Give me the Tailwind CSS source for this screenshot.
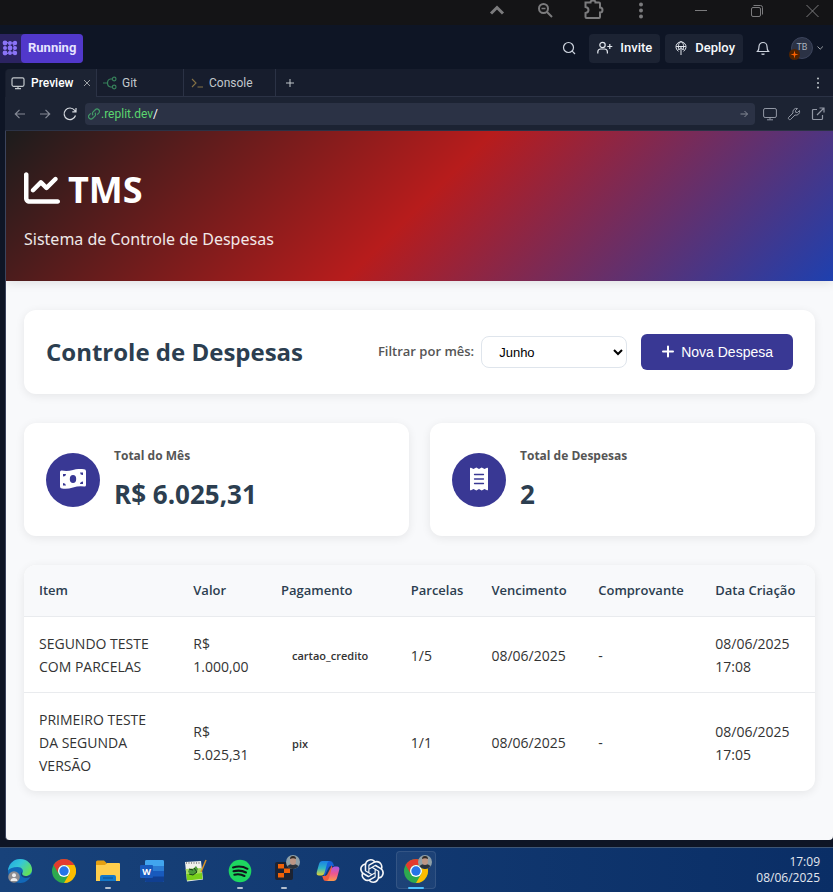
<!DOCTYPE html>
<html lang="pt-BR">
<head>
<meta charset="utf-8">
<meta name="viewport" content="width=device-width, initial-scale=1">
<title>TMS - Sistema de Controle de Despesas</title>
<script src="https://cdn.jsdelivr.net/npm/@tailwindcss/browser@4"></script>
</head>
<body class="min-h-screen flex flex-col overflow-x-hidden bg-[#0e1525] font-['Open_Sans',sans-serif]">

<!-- Browser title bar -->
<div class="flex h-[25px] shrink-0 items-start justify-end gap-9 overflow-hidden bg-[#141416] pr-2 text-[#7b7b7d]">
  <div class="flex gap-6">
    <button aria-label="Recolher" class="size-6"><svg viewBox="0 0 24 24" class="size-6" fill="none" stroke="currentColor" stroke-width="3"><path d="M6 13.5 12 7.5l6 6"/></svg></button>
    <button aria-label="Zoom" class="size-6"><svg viewBox="0 0 24 24" class="size-6" fill="none" stroke="currentColor" stroke-width="2"><circle cx="10.5" cy="8.500" r="4.500"/><path d="m14 12 5 5"/><path d="M8.500 8.500h4" stroke-width="1.500"/></svg></button>
    <button aria-label="Extensões" class="size-6"><svg viewBox="0 0 24 24" class="size-6" fill="none" stroke="currentColor" stroke-width="2"><path d="M4.500 2.500H9.500Q9.500.5 12 .5T14.500 2.500H18Q19 2.500 19 3.500V7.500Q21.500 7.500 21.500 10T19 12.500V17Q19 18 18 18H5.500Q4.500 18 4.500 17V13Q7.500 12.500 7.500 10T4.500 7Z"/></svg></button>
    <button aria-label="Menu" class="size-6"><svg viewBox="0 0 24 24" class="size-6" fill="currentColor"><circle cx="12" cy="4.500" r="2"/><circle cx="12" cy="10.500" r="2"/><circle cx="12" cy="16.500" r="2"/></svg></button>
  </div>
  <div class="flex gap-8">
    <button aria-label="Minimizar" class="size-6"><svg viewBox="0 0 24 24" class="size-6" fill="none" stroke="currentColor"><path d="M6 10.500h12"/></svg></button>
    <button aria-label="Restaurar" class="size-6"><svg viewBox="0 0 24 24" class="size-6" fill="none" stroke="currentColor"><rect x="6.500" y="7.500" width="9" height="9" rx="1.500"/><path d="M8.500 5.500h7q2 0 2 2v7"/></svg></button>
    <button aria-label="Fechar" class="size-6"><svg viewBox="0 0 24 24" class="size-6" fill="none" stroke="currentColor"><path d="m5.500 5 12 12m0-12-12 12"/></svg></button>
  </div>
</div>

<!-- Workspace header -->
<header class="flex h-11 shrink-0 items-center justify-between pt-[2px] pr-2 font-[Roboto,sans-serif] text-[13px] text-[#f5f9fc]">
  <button class="flex h-[29px] items-center rounded-r bg-[#2b2361] font-bold text-[#e6e3ff]">
    <svg viewBox="0 0 21 20" class="h-5 w-[21px]" fill="#8b74f7"><circle cx="5" cy="5" r="2.400"/><circle cx="10" cy="5" r="2"/><circle cx="15" cy="5" r="2.200"/><circle cx="5" cy="10" r="2"/><circle cx="10" cy="10" r="2.400"/><circle cx="15" cy="10" r="2"/><circle cx="5" cy="15" r="2.400"/><circle cx="10" cy="15" r="2"/><circle cx="15" cy="15" r="2.200"/><path d="m7 4 5 6-5 6M12 4l3 6-3 6" stroke="#8b74f7" fill="none"/></svg>
    <span class="flex h-full items-center rounded bg-[#5138cb] px-[7px]">Running</span>
  </button>
  <div class="flex items-center">
    <button aria-label="Buscar" class="mr-3"><svg viewBox="0 0 16 16" class="size-4" fill="none" stroke="#cdd3de" stroke-width="1.200"><circle cx="7.500" cy="7.500" r="5"/><path d="m11.200 11.200 2.800 2.800"/></svg></button>
    <button class="mr-[5px] flex h-[29px] items-center gap-[7px] rounded bg-[#1c2333] px-2 font-medium"><svg viewBox="0 0 16 16" class="size-4" fill="none" stroke="#e4e8ef" stroke-width="1.200"><circle cx="5.500" cy="5" r="2.700"/><path d="M.8 13.500V12q0-3 3-3h3.600q3 0 3 3v1.500M12.800 4v5M10.300 6.500h5"/></svg>Invite</button>
    <button class="mr-3 flex h-[29px] items-center gap-[6px] rounded bg-[#1c2333] px-2 font-medium"><svg viewBox="0 0 16 16" class="size-4" fill="none" stroke="#e4e8ef"><path d="M5.500 11.200A5 5 0 1 1 10.500 11.200M3.200 6.500h9.600M6 10C4.500 6 6 2 8 1.500 10 2 11.500 6 10 10M8 15V7.500M5.700 10 8 7.500l2.300 2.500"/></svg>Deploy</button>
    <button aria-label="Notificações" class="mr-5"><svg viewBox="0 0 16 16" class="size-4" fill="none" stroke="#cdd3de" stroke-width="1.200"><path d="M2.500 11.500Q4 10 4 6.500a4 4 0 0 1 8 0q0 3.500 1.500 5ZM6.500 13.800q1.500 1.300 3 0"/></svg></button>
    <button aria-label="Conta" class="relative mr-[2px] flex size-[22px] items-center justify-center rounded-full border border-[#3c445c] bg-[#2b3245] text-[9px] text-[#aab2bf]">TB<span class="absolute -bottom-[2px] -left-[3px] size-[11px] rounded-full bg-[#512300]"><svg viewBox="0 0 11 11" class="size-[11px]" fill="#ff6200"><path d="M5.500 1.500 6.300 4.700 9.500 5.500 6.300 6.300 5.500 9.500 4.700 6.300 1.500 5.500 4.700 4.700Z"/></svg></span></button>
    <svg viewBox="0 0 10 10" class="size-[10px]" fill="none" stroke="#9da2a6"><path d="m2.500 3.500 2.700 2.700 2.700-2.700"/></svg>
  </div>
</header>

<div class="flex flex-1 flex-col pl-[5px]">
  <!-- Pane tabs -->
  <div class="flex h-7 items-stretch rounded-tl bg-[#171d2d] pl-px font-[Roboto,sans-serif] text-[12px] text-[#c2c8cc]">
    <div class="flex w-[91px] items-center rounded-tl border-r border-[#2b3245] bg-[#1c2333] pl-[5px] font-medium text-white">
      <svg viewBox="0 0 14 14" class="size-[14px]" fill="none" stroke="#c2c8cc" stroke-width="1.200"><rect x="1" y="1.800" width="12" height="8.500" rx="1.500"/><path d="M4 12.600h6M7 10.500v2"/></svg>
      <a href="#preview" class="ml-[6px]">Preview</a>
      <button aria-label="Fechar aba" class="ml-auto mr-1"><svg viewBox="0 0 10 10" class="size-[10px]" fill="none" stroke="#9da2a6"><path d="m2 2 6 6m0-6-6 6"/></svg></button>
    </div>
    <a href="#git" class="flex w-[87px] items-center gap-[5px] border-r border-b border-[#2b3245] pl-[6px]"><svg viewBox="0 0 14 14" class="size-[14px]" fill="none" stroke="#37815b" stroke-width="1.200"><path d="M0 7h4M9.500 3H7.500Q4.500 3.500 4.500 7t3 4h2"/><circle cx="11.200" cy="3" r="1.800"/><circle cx="11.200" cy="11" r="1.800"/></svg>Git</a>
    <a href="#console" class="flex w-[92px] items-center gap-[5px] border-r border-b border-[#2b3245] pl-[6px]"><svg viewBox="0 0 14 14" class="size-[14px]" fill="none" stroke="#867245" stroke-width="1.100"><path d="m2 3 4 4-4 4M7.500 11H13"/></svg>Console</a>
    <div class="flex flex-1 items-center justify-between border-b border-[#2b3245] pr-2 pl-[7px]">
      <button aria-label="Nova aba"><svg viewBox="0 0 14 14" class="size-[14px]" fill="none" stroke="#c2c8cc"><path d="M7 3v8M3 7h8"/></svg></button>
      <button aria-label="Opções"><svg viewBox="0 0 14 14" class="size-[14px]" fill="#c2c8cc"><circle cx="7" cy="2.500" r="1"/><circle cx="7" cy="7" r="1"/><circle cx="7" cy="11.500" r="1"/></svg></button>
    </div>
  </div>

  <!-- Address row -->
  <div class="flex h-[34px] items-center border-b border-[#2b3245] bg-[#1c2333] pr-2 pl-2 font-[Roboto,sans-serif] text-[12px]">
    <div class="flex shrink-0 items-center gap-[11px] text-[#858a96]">
      <button aria-label="Voltar"><svg viewBox="0 0 14 14" class="size-[14px]" fill="none" stroke="currentColor" stroke-width="1.200"><path d="M12 7H2.500M6.500 2.800 2.300 7l4.200 4.200"/></svg></button>
      <button aria-label="Avançar"><svg viewBox="0 0 14 14" class="size-[14px]" fill="none" stroke="currentColor" stroke-width="1.200"><path d="M2 7h9.500M7.500 2.800 11.700 7l-4.200 4.200"/></svg></button>
      <button aria-label="Recarregar" class="text-[#d5d9df]"><svg viewBox="0 0 14 14" class="size-[14px]" fill="none" stroke="currentColor" stroke-width="1.200"><path d="M12.500 8.500A5.800 5.800 0 1 1 11.500 3.200L13 4.800M13 1v3.800H9.300"/></svg></button>
    </div>
    <div class="mx-2 flex h-[22px] flex-1 items-center rounded bg-[#2b3245] pr-1 pl-[3px]">
      <svg viewBox="0 0 14 14" class="size-3 shrink-0" fill="none" stroke="#419a67" stroke-width="1.400"><path d="M6 8.500a2.800 2.800 0 0 1 0-4L8.500 2a2.800 2.800 0 0 1 4 4L10.800 7.700M8 5.500a2.800 2.800 0 0 1 0 4L5.500 12a2.800 2.800 0 0 1-4-4L3.200 6.300"/></svg>
      <label for="url" class="pl-px text-[#5bd66f]">.replit.dev</label>
      <input id="url" value="/" class="min-w-0 flex-1 bg-transparent text-white outline-none">
      <button aria-label="Ir" class="text-[#858a96]"><svg viewBox="0 0 14 14" class="size-[14px]" fill="none" stroke="currentColor"><path d="M3.500 7h7M7.500 4l3 3-3 3"/></svg></button>
    </div>
    <div class="flex items-center gap-[10px] text-[#9298a5]">
      <button aria-label="Dispositivos"><svg viewBox="0 0 14 14" class="size-[14px]" fill="none" stroke="currentColor"><rect x=".6" y="1.500" width="12.800" height="9" rx="1.500"/><path d="M4 12.800h6M7 10.500v2"/></svg></button>
      <button aria-label="Ferramentas"><svg viewBox="0 0 14 14" class="size-[14px]" fill="none" stroke="currentColor"><path d="M12.500 3.500 10.500 5.500 8.700 5.300 8.500 3.500 10.500 1.500A3.600 3.600 0 0 0 6 6L1.500 10.500a1.500 1.500 0 0 0 2 2L8 8a3.600 3.600 0 0 0 4.500-4.500Z"/></svg></button>
      <button aria-label="Abrir em nova aba"><svg viewBox="0 0 14 14" class="size-[14px]" fill="none" stroke="currentColor" stroke-width="1.200"><path d="M6 2.500H2.500q-1 0-1 1v8q0 1 1 1h8q1 0 1-1V8M8.500 1H13v4.500M13 1 6 8"/></svg></button>
    </div>
  </div>

  <!-- Application -->
  <div class="flex flex-1 flex-col overflow-hidden rounded-b border-l border-[#3c445c] bg-[#f8f9fb]">
    <header class="bg-linear-[135deg,#1c1c1c_0%,#b71c1c_50%,#1e40af_100%] px-[18px] pt-8 pb-7 text-white shadow-[0_2px_10px_rgba(0,0,0,0.1)]">
      <h1 class="flex items-center gap-2 text-[36px] leading-[54px] font-bold">
        <svg viewBox="0 0 512 512" class="mb-1 size-9" fill="currentColor"><path d="M64 64c0-17.700-14.300-32-32-32S0 46.300 0 64V400c0 44.200 35.800 80 80 80H480c17.700 0 32-14.300 32-32s-14.300-32-32-32H80c-8.800 0-16-7.200-16-16V64zm406.600 86.600c12.500-12.500 12.500-32.800 0-45.300s-32.800-12.500-45.300 0L320 210.700l-57.400-57.400c-12.500-12.500-32.800-12.500-45.300 0l-112 112c-12.500 12.500-12.500 32.800 0 45.300s32.800 12.500 45.300 0L240 221.300l57.400 57.400c12.500 12.500 32.800 12.500 45.300 0l128-128z"/></svg>
        TMS
      </h1>
      <p class="mt-2 font-['Noto_Sans',sans-serif] text-[16px] leading-7 opacity-90">Sistema de Controle de Despesas</p>
    </header>

    <main class="flex flex-col gap-[29px] px-[18px] pt-[29px] pb-12">
      <section class="flex items-center justify-between rounded-xl bg-white px-[22px] py-6 shadow-[0_2px_10px_rgba(0,0,0,0.08)]">
        <h2 class="text-[24px] leading-9 font-bold whitespace-nowrap text-[#2c3e50]">Controle de Despesas</h2>
        <div class="flex items-center">
          <label for="mes" class="mr-[7px] text-[13px] font-semibold whitespace-nowrap text-[#555]">Filtrar por mês:</label>
          <select id="mes" class="mr-[14px] h-8 w-[146px] rounded-lg border border-[#dfe5ec] bg-white pl-[13px] font-['Liberation_Sans',sans-serif] text-[13px] text-black"><option>Junho</option><option>Julho</option></select>
          <button class="flex h-9 items-center gap-[6px] rounded-md bg-[#393894] px-5 font-['Liberation_Sans',sans-serif] text-[14px] whitespace-nowrap text-white">
            <svg viewBox="0 0 14 14" class="size-[14px]" fill="none" stroke="currentColor" stroke-width="2" stroke-linecap="round"><path d="M7 1.500v10M2 6.500h10"/></svg>Nova Despesa</button>
        </div>
      </section>

      <section class="grid grid-cols-2 gap-[21px]">
        <article class="flex items-center gap-[14px] rounded-xl bg-white px-[22px] py-[21px] shadow-[0_2px_10px_rgba(0,0,0,0.08)]">
          <div class="flex size-[54px] items-center justify-center rounded-full bg-[#393894] pb-[2px]">
            <svg viewBox="0 0 26 20" class="h-5 w-[26px]"><path fill="#fff" d="M0 3Q0 1.300 1.700 1.500 7 2.700 13 1T24 .3Q26 .5 26 2.200V16q0 1.700-1.700 1.500Q19 16.500 13 18.500T2 19.500Q0 19.300 0 17.500Z"/><g fill="#393894"><ellipse cx="13" cy="10" rx="3.200" ry="4"/><path d="M3 5h3q-.2 2.500-3 2.500ZM3 14q2.800.2 3 2.500H3ZM23 3.500h-3q.2 2.600 3 2.500ZM23 12.500q-2.800.1-3 2.500h3Z"/></g></svg>
          </div>
          <div>
            <h3 class="text-[12px] leading-6 font-bold text-[#555]">Total do Mês</h3>
            <p class="mt-[5px] text-[26px] leading-[42px] font-bold text-[#2c3e50]">R$ 6.025,31</p>
          </div>
        </article>
        <article class="flex items-center gap-[14px] rounded-xl bg-white px-[22px] py-[21px] shadow-[0_2px_10px_rgba(0,0,0,0.08)]">
          <div class="flex size-[54px] items-center justify-center rounded-full bg-[#393894] pb-[2px]">
            <svg viewBox="0 0 18 24" class="h-6 w-[18px]"><path fill="#fff" d="M0 1.500Q0 .3 1 .8L3.500 2 6.300.5 9 2 11.700.5 14.500 2 17 .8q1-.5 1 .7V22.500q0 1.200-1 .7L14.500 22l-2.800 1.500L9 22l-2.700 1.500L3.500 22 1 23.200q-1 .5-1-.7Z"/><path stroke="#393894" stroke-width="1.300" stroke-linecap="round" d="M4.500 7.500h9M4.500 12h9M4.500 16.500h9"/></svg>
          </div>
          <div>
            <h3 class="text-[12px] leading-6 font-bold text-[#555]">Total de Despesas</h3>
            <p class="mt-[5px] text-[26px] leading-[42px] font-bold text-[#2c3e50]">2</p>
          </div>
        </article>
      </section>

      <div class="overflow-hidden rounded-xl bg-white shadow-[0_2px_10px_rgba(0,0,0,0.08)]">
        <table class="w-full table-fixed text-left text-[14px] leading-[23px] text-[#333] [&_td]:px-[15px] [&_td]:pt-[15px] [&_td]:pb-[14px] [&_th]:px-[15px] [&_th]:py-[14px]">
          <colgroup><col class="w-[19.500%]"><col class="w-[11.100%]"><col class="w-[16.400%]"><col class="w-[10.200%]"><col class="w-[13.500%]"><col class="w-[14.800%]"><col></colgroup>
          <thead class="border-b border-[#e9ebee] bg-[#f8f9fb] whitespace-nowrap text-[#2c3e50] [&_th]:text-[13px] [&_th]:font-semibold">
            <tr><th>Item</th><th>Valor</th><th>Pagamento</th><th>Parcelas</th><th>Vencimento</th><th>Comprovante</th><th>Data Criação</th></tr>
          </thead>
          <tbody>
            <tr class="border-b border-[#e9ebee]"><td>SEGUNDO TESTE COM PARCELAS</td><td>R$ 1.000,00</td><td><span class="px-[11px] text-[11px] font-semibold">cartao_credito</span></td><td>1/5</td><td>08/06/2025</td><td>-</td><td>08/06/2025 17:08</td></tr>
            <tr><td>PRIMEIRO TESTE DA SEGUNDA VERSÃO</td><td>R$ 5.025,31</td><td><span class="px-[11px] text-[11px] font-semibold">pix</span></td><td>1/1</td><td>08/06/2025</td><td>-</td><td>08/06/2025 17:05</td></tr>
          </tbody>
        </table>
      </div>
    </main>
  </div>
</div>

<!-- Taskbar -->
<footer class="mt-[7px] flex h-[45px] shrink-0 items-center justify-between border-t border-[#3e5675] bg-linear-to-r from-[#18427a] to-[#0a2e66] pr-[13px]">
  <nav class="-ml-[2px] flex h-full [&>button]:relative [&>button]:flex [&>button]:w-11 [&>button]:items-center [&>button]:justify-center [&>button]:pt-px">
    <button aria-label="Edge"><svg viewBox="0 0 24 24" class="size-6"><defs><linearGradient id="e1" x1="0" y1="0" x2="1" y2=".6"><stop stop-color="#22a6e0"/><stop offset=".5" stop-color="#35c7d8"/><stop offset="1" stop-color="#63e05a"/></linearGradient></defs><circle cx="12" cy="12" r="12" fill="#1268b8"/><path fill="url(#e1)" d="M0 11.500C1 4.500 6 0 12 0c7 0 12 5 12 10.500 0 4-3 6.500-6.500 6.500-3 0-4-1.500-3-3 1.500-2.500-.5-6-5-6C5 8 1.500 9.500 0 11.500Z"/><path fill="#17427b" d="M14 12.500c-2.500 2.500-.5 6.500 4 6.500 2 0 3.800-.8 5-1.500l1-3c-2 2-4 2.700-6.500 2.500-3 0-4.200-2-3.500-4.500Z"/><circle cx="6" cy="18" r="5.800" fill="#8e8d90"/><circle cx="6" cy="16.300" r="2" fill="#eee"/><path d="M2.600 22q0-3 3.400-3t3.400 3Z" fill="#eee"/></svg></button>
    <button aria-label="Chrome"><svg viewBox="0 0 24 24" class="size-6"><circle cx="12" cy="12" r="12" fill="#2da94f"/><path fill="#e33b2e" d="M1.600 6A12 12 0 0 1 22.400 6H12a6 6 0 0 0-5.200 9Z"/><path fill="#fdbd00" d="M22.400 6A12 12 0 0 1 12 24l5.200-9A6 6 0 0 0 12 6Z"/><circle cx="12" cy="12" r="6" fill="#fff"/><circle cx="12" cy="12" r="4.700" fill="#2674e8"/></svg></button>
    <button aria-label="Explorador de Arquivos"><svg viewBox="0 0 24 24" class="size-6"><path fill="#e6a010" d="M0 3q0-1.500 1.500-1.500H8L10.500 4V8H0Z"/><path fill="#ffce4d" d="M0 6h9l2-2h12q1 0 1 1v17H0Z"/><path fill="#1479c9" d="M4 22v-4q0-2 2-2h12q2 0 2 2v4Z"/><path stroke="#0b4f91" d="M7 19h10"/></svg><span class="absolute bottom-[3px] h-[2px] w-[6px] rounded bg-[#b4bfce]"></span></button>
    <button aria-label="Word"><svg viewBox="0 0 24 24" class="size-6"><rect x="5" y="1" width="19" height="22" rx="1.500" fill="#2b7cd3"/><path fill="#41a5ee" d="M5 2.500Q5 1 6.500 1h16Q24 1 24 2.500V7H5Z"/><path fill="#185abd" d="M5 12h19v6H5Z"/><path fill="#103f91" d="M5 17.500h19v4q0 1.500-1.500 1.500h-16Q5 23 5 21.500Z"/><rect y="6" width="13" height="13" rx="1" fill="#185abd"/><text x="6.500" y="15.500" fill="#fff" font-family="Open Sans" font-weight="700" font-size="9" text-anchor="middle">W</text></svg></button>
    <button aria-label="Notepad++"><svg viewBox="0 0 24 24" class="size-6"><path fill="#eef0ec" d="m1 3 16-1 2 18.500L3 22.500Z"/><path fill="#a9dc62" d="m1.700 10 15.600-1L18 14 2.300 15.500Z"/><path fill="#78d01a" d="m2.300 15 15.800-1L18.600 20 3 21.500Z"/><path d="M2 4h14" stroke="#999" stroke-dasharray="1 1.500" stroke-width="2"/><path fill="#4b9a3a" d="M4 13q1-4 5-3l3-3 2 3-2 4-4 2Z"/><path stroke="#183c1b" fill="none" d="M5 10l4 1m1-2 3 4-4 3-4-1"/><path stroke="#d99427" stroke-width="1.500" d="m22 1-5 12"/></svg></button>
    <button aria-label="Spotify"><svg viewBox="0 0 24 24" class="size-6"><circle cx="12" cy="12" r="11.300" fill="#1ed760"/><path d="M5 8.500q8-2.300 14.500 1.300M5.500 12.300q7-1.800 12.500 1.200M6.300 15.800q5.500-1.300 10.200 1.200" fill="none" stroke="#10151b" stroke-width="2" stroke-linecap="round"/></svg><span class="absolute bottom-[3px] h-[2px] w-[6px] rounded bg-[#b4bfce]"></span></button>
    <button aria-label="Replit"><svg viewBox="0 0 32 32" class="size-8"><rect x="7" y="7" width="18" height="18" rx="2" fill="#1c2333"/><path fill="#f26207" d="M10 9h6v4.500h-6zM16 13.500h6v4.500h-6zM10 18h6v4.500h-6z"/><circle cx="25" cy="7" r="7" fill="#8fa0a8"/><path fill="#29313b" d="M19.500 11q2-2 5.500-2t5.500 2q-2 3-5.500 3t-5.500-3Z"/><ellipse cx="25" cy="6" rx="3" ry="4" fill="#bd9685"/><path d="M22 4q0-3 3-3t3 3q-3-1.500-6 0Z" fill="#302824"/></svg><span class="absolute bottom-[3px] h-[2px] w-[6px] rounded bg-[#b4bfce]"></span></button>
    <button aria-label="Copilot"><svg viewBox="0 0 24 24" class="size-6"><defs><linearGradient id="c1" x2="0" y2="1"><stop stop-color="#1a7fe5"/><stop offset=".5" stop-color="#2fb6c5"/><stop offset="1" stop-color="#e6d32f"/></linearGradient><linearGradient id="c2" x2="0" y2="1"><stop stop-color="#a859e8"/><stop offset=".5" stop-color="#f0568f"/><stop offset="1" stop-color="#fb9a4a"/></linearGradient></defs><path fill="#1661d9" d="M8 2h6q2.500 0 3.200 2.500L18 7h-3q-2 0-3 3L8 18Z"/><path fill="url(#c1)" d="M6.500 2H13q-1.500 1-2 3L8.500 14q-.8 2.500-3 2.500H3Q0 16.500.8 13L3 5q.8-3 3.500-3Z"/><path fill="#ef5b3e" d="M16 22h-6q-2.500 0-3-2.500L6.300 17H9q2 0 3-3l4-8Z"/><path fill="url(#c2)" d="M17.500 22H11q1.500-1 2-3l2.500-9q.8-2.500 3-2.500H21q3 0 2.200 3.500L21 19q-.8 3-3.500 3Z"/></svg></button>
    <button aria-label="ChatGPT"><svg viewBox="0 0 24 24" class="size-6" fill="#f5f6f8"><path d="M22.282 9.821a5.985 5.985 0 0 0-.516-4.910 6.046 6.046 0 0 0-6.510-2.900A6.065 6.065 0 0 0 4.981 4.182a5.985 5.985 0 0 0-3.998 2.900 6.046 6.046 0 0 0 .743 7.097 5.980 5.980 0 0 0 .511 4.911 6.051 6.051 0 0 0 6.515 2.900A5.985 5.985 0 0 0 13.260 24a6.056 6.056 0 0 0 5.772-4.206 5.990 5.990 0 0 0 3.998-2.900 6.056 6.056 0 0 0-.748-7.073zM13.260 22.430a4.476 4.476 0 0 1-2.876-1.041l.142-.08 4.778-2.758a.795.795 0 0 0 .393-.681v-6.737l2.020 1.169a.071.071 0 0 1 .038.052v5.583a4.504 4.504 0 0 1-4.495 4.494zM3.600 18.304a4.471 4.471 0 0 1-.535-3.014l.142.085 4.783 2.759a.771.771 0 0 0 .781 0l5.843-3.369v2.332a.08.08 0 0 1-.033.062L9.740 19.950a4.500 4.500 0 0 1-6.140-1.646zM2.340 7.896a4.485 4.485 0 0 1 2.366-1.973V11.600a.766.766 0 0 0 .388.677l5.815 3.354-2.020 1.169a.076.076 0 0 1-.071 0l-4.830-2.787A4.504 4.504 0 0 1 2.340 7.872zm16.597 3.855-5.833-3.387L15.119 7.200a.076.076 0 0 1 .071 0l4.830 2.791a4.494 4.494 0 0 1-.676 8.105v-5.678a.790.790 0 0 0-.407-.667zm2.010-3.023-.141-.085-4.774-2.782a.776.776 0 0 0-.785 0L9.409 9.230V6.897a.066.066 0 0 1 .028-.061l4.830-2.787a4.500 4.500 0 0 1 6.680 4.660zM8.307 12.863l-2.020-1.164a.080.080 0 0 1-.038-.057V6.075a4.500 4.500 0 0 1 7.375-3.453l-.142.080-4.778 2.758a.795.795 0 0 0-.393.681zm1.097-2.365 2.602-1.500 2.607 1.500v2.999l-2.597 1.500-2.607-1.500z"/></svg></button>
    <button aria-label="Chrome, perfil" class="before:absolute before:inset-x-[2px] before:inset-y-[3px] before:rounded before:border before:border-white/10 before:bg-white/5"><svg viewBox="0 0 32 32" class="relative size-8"><circle cx="16" cy="16" r="12" fill="#2da94f"/><path fill="#e33b2e" d="M5.600 10A12 12 0 0 1 26.400 10H16a6 6 0 0 0-5.200 9Z"/><path fill="#fdbd00" d="M26.400 10A12 12 0 0 1 16 28l5.200-9A6 6 0 0 0 16 10Z"/><circle cx="16" cy="16" r="6" fill="#fff"/><circle cx="16" cy="16" r="4.700" fill="#2674e8"/><circle cx="25" cy="7" r="7" fill="#8fa0a8"/><path fill="#29313b" d="M19.500 11q2-2 5.500-2t5.500 2q-2 3-5.500 3t-5.500-3Z"/><ellipse cx="25" cy="6" rx="3" ry="4" fill="#bd9685"/><path d="M22 4q0-3 3-3t3 3q-3-1.500-6 0Z" fill="#302824"/></svg><span class="absolute bottom-[3px] h-[2px] w-4 rounded bg-[#4cc2ff]"></span></button>
  </nav>
  <time datetime="2025-06-08T17:09" class="text-right text-[12px] leading-4 text-[#e3e8ef]">17:09<br>08/06/2025</time>
</footer>
</body>
</html>
